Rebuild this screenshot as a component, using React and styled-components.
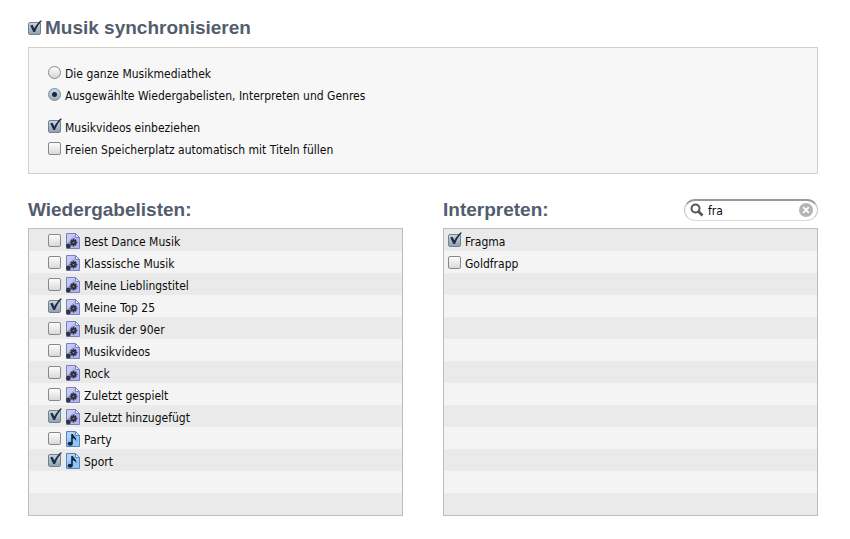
import React, { useState } from "react";
import styled, { createGlobalStyle } from "styled-components";

const GlobalStyle = createGlobalStyle`
  * {
    box-sizing: border-box;
  }
  body {
    margin: 0;
    background: #ffffff;
    color: #0c0c0c;
    font-family: Tahoma, "DejaVu Sans Condensed", "Noto Sans", sans-serif;
    font-size: 12px;
    line-height: 22px;
  }
`;

const Page = styled.main`
  padding: 16px 32px 22px 28px;
`;

const Heading = styled.h2`
  margin: 0;
  color: #525d6e;
  font-family: "Liberation Sans", Arial, sans-serif;
  font-size: 19px;
  font-weight: bold;
  line-height: 24px;
`;

const Panel = styled.section`
  margin-top: 7px;
  padding: 15px 19px 12px;
  background: #f7f7f7;
  border: 1px solid #cfcfcb;
`;

const OptionGroup = styled.div`
  & + & {
    margin-top: 10px;
  }
`;

const Columns = styled.div`
  display: grid;
  grid-template-columns: 1fr 1fr;
  gap: 40px;
  margin-top: 24px;
`;

const ColumnHeader = styled.header`
  display: flex;
  justify-content: space-between;
  align-items: center;
  height: 24px;
  margin-bottom: 6px;
`;

const List = styled.ul`
  margin: 0;
  padding: 0;
  list-style: none;
  border: 1px solid #bdbdbd;
`;

const Row = styled.li`
  height: 22px;
  padding-top: 2px;
  padding-left: ${(props) => (props.$indent ? "19px" : "4px")};
  background: #f4f4f4;

  &:nth-child(odd) {
    background: #eaeaea;
  }
`;

const Option = styled.label`
  display: flex;
  align-items: center;
  gap: 4px;
  line-height: ${(props) => (props.$title ? "24px" : "22px")};
`;

const ControlBox = styled.span`
  position: relative;
  flex: none;
  width: 13px;
  height: 13px;
  margin-bottom: ${(props) => (props.$title ? "0" : "3px")};
`;

const Checkbox = styled.input`
  appearance: none;
  display: block;
  width: 13px;
  height: 13px;
  margin: 0;
  border: 1px solid #85888c;
  border-radius: 2px;
  background: linear-gradient(#fdfdfd, #d9d9d9);

  &:checked {
    border-color: #75808e;
    background: linear-gradient(#c9d4e0, #92a1b2);
  }

  & + svg {
    display: none;
  }

  &:checked + svg {
    display: block;
  }
`;

const Radio = styled.input`
  appearance: none;
  display: block;
  width: 13px;
  height: 13px;
  margin: 0;
  border: 1px solid #85888c;
  border-radius: 50%;
  background: linear-gradient(#fdfdfd, #d5d5d5);

  &:checked {
    border-color: #7d8896;
    background:
      radial-gradient(circle, #17283f 0 2px, transparent 3px),
      linear-gradient(#ccd7e3, #9eacbc);
  }
`;

// the tick sticks out of its box at the top right
const TickSvg = styled.svg`
  position: absolute;
  left: 0;
  bottom: 0;
  width: 15px;
  height: 15px;
  pointer-events: none;
`;

const ItemName = styled.span`
  display: flex;
  align-items: center;
  gap: 3px;
  margin-left: 1px;
`;

const FileSvg = styled.svg`
  flex: none;
  width: 15px;
  height: 16px;
  margin-bottom: 2px;
`;

const SearchBox = styled.div`
  display: flex;
  align-items: center;
  gap: 4px;
  width: 134px;
  height: 22px;
  padding: 0 4px 0 5px;
  background: #ffffff;
  border: 1px solid #c4c4c4;
  border-top: 2px solid #9a9a9a;
  border-bottom-color: #dadada;
  border-radius: 11px;
`;

const SearchSvg = styled.svg`
  flex: none;
  width: 14px;
  height: 14px;
  margin-bottom: 1px;
`;

const SearchInput = styled.input`
  flex: 1;
  min-width: 0;
  padding: 0;
  border: none;
  outline: none;
  background: none;
  color: inherit;
  font: inherit;
  line-height: 18px;
`;

const ClearButton = styled.button`
  display: flex;
  flex: none;
  margin-bottom: 1px;
  padding: 0;
  border: none;
  background: none;
`;

const playlists = [
  { name: "Best Dance Musik", smart: true },
  { name: "Klassische Musik", smart: true },
  { name: "Meine Lieblingstitel", smart: true },
  { name: "Meine Top 25", smart: true, checked: true },
  { name: "Musik der 90er", smart: true },
  { name: "Musikvideos", smart: true },
  { name: "Rock", smart: true },
  { name: "Zuletzt gespielt", smart: true },
  { name: "Zuletzt hinzugefügt", smart: true, checked: true },
  { name: "Party" },
  { name: "Sport", checked: true },
];

const artists = [{ name: "Fragma", checked: true }, { name: "Goldfrapp" }];

const ROWS = 13;

function CheckOption({ title, checked, children }) {
  return (
    <Option $title={title}>
      <ControlBox $title={title}>
        <Checkbox type="checkbox" defaultChecked={checked} />
        <TickSvg viewBox="0 0 15 15" aria-hidden="true">
          <path
            d="M2.2 5.6 4.6 4.8 6.2 8.4C8 5.2 10 2.6 12.4.4L14 .8C11 4 8.8 7.4 7 12H5.4Z"
            fill="#1c2c42"
          />
        </TickSvg>
      </ControlBox>
      {children}
    </Option>
  );
}

function RadioOption({ value, checked, children }) {
  return (
    <Option>
      <ControlBox>
        <Radio type="radio" name="scope" value={value} defaultChecked={checked} />
      </ControlBox>
      {children}
    </Option>
  );
}

function FileIcon({ smart }) {
  return (
    <FileSvg viewBox="0 0 15 16" aria-hidden="true">
      <path
        d="M.5.5H9.5L13.5 4.5V15.5H.5Z"
        fill={smart ? "#b0b7f2" : "#93c5f5"}
        stroke={smart ? "#7b80bd" : "#5586bb"}
      />
      <path d="M1 1H9L1 10Z" fill="#ffffff" opacity="0.25" />
      <path
        d="M9.5.5V4.5H13.5Z"
        fill={smart ? "#eceeff" : "#e2f1ff"}
        stroke={smart ? "#7b80bd" : "#5586bb"}
      />
      {smart ? (
        <g fill="#30323f">
          <circle cx="7.5" cy="9.5" r="2.9" />
          <path
            d="M7.5 5.6V13.4M3.6 9.5H11.4M4.8 6.8 10.2 12.2M10.2 6.8 4.8 12.2"
            stroke="#30323f"
            strokeWidth="1.6"
          />
          <circle cx="7.5" cy="9.5" r=".8" fill="#8d92c4" />
          <circle cx="2.4" cy="13" r="2.4" />
        </g>
      ) : (
        <g fill="#14253f">
          <path d="M5.2 3H6.8C7.4 5.4 10.8 6 10.4 10.4 9.6 8.4 8.4 7.6 6.8 7.2V12.8H5.2Z" />
          <ellipse cx="4.2" cy="12.8" rx="2.6" ry="2" />
        </g>
      )}
    </FileSvg>
  );
}

function EmptyRows({ used }) {
  return Array.from({ length: ROWS - used }, (_, i) => <Row key={i} aria-hidden="true" />);
}

function App() {
  const [query, setQuery] = useState("fra");
  const found = artists.filter((a) => a.name.toLowerCase().includes(query.toLowerCase()));

  return (
    <>
      <GlobalStyle />
      <Page>
        <Heading>
          <CheckOption title checked>
            Musik synchronisieren
          </CheckOption>
        </Heading>
        <Panel>
          <OptionGroup>
            <RadioOption value="all">Die ganze Musikmediathek</RadioOption>
            <RadioOption value="selected" checked>
              Ausgewählte Wiedergabelisten, Interpreten und Genres
            </RadioOption>
          </OptionGroup>
          <OptionGroup>
            <CheckOption checked>Musikvideos einbeziehen</CheckOption>
            <CheckOption>Freien Speicherplatz automatisch mit Titeln füllen</CheckOption>
          </OptionGroup>
        </Panel>
        <Columns>
          <section>
            <ColumnHeader>
              <Heading>Wiedergabelisten:</Heading>
            </ColumnHeader>
            <List>
              {playlists.map((p) => (
                <Row key={p.name} $indent>
                  <CheckOption checked={p.checked}>
                    <ItemName>
                      <FileIcon smart={p.smart} />
                      {p.name}
                    </ItemName>
                  </CheckOption>
                </Row>
              ))}
              <EmptyRows used={playlists.length} />
            </List>
          </section>
          <section>
            <ColumnHeader>
              <Heading>Interpreten:</Heading>
              <SearchBox>
                <SearchSvg viewBox="0 0 14 14" aria-hidden="true">
                  <circle cx="5.5" cy="5.5" r="4" fill="none" stroke="#555" strokeWidth="2" />
                  <path d="M8.5 8.5 12.5 12.5" stroke="#555" strokeWidth="2.6" />
                </SearchSvg>
                <SearchInput
                  type="text"
                  aria-label="Interpreten suchen"
                  value={query}
                  onChange={(e) => setQuery(e.target.value)}
                />
                <ClearButton type="button" aria-label="Suche löschen" onClick={() => setQuery("")}>
                  <svg width="14" height="14" viewBox="0 0 14 14" aria-hidden="true">
                    <circle cx="7" cy="7" r="7" fill="#b5b5b5" />
                    <path d="M4.2 4.2 9.8 9.8M9.8 4.2 4.2 9.8" stroke="#fff" strokeWidth="1.8" />
                  </svg>
                </ClearButton>
              </SearchBox>
            </ColumnHeader>
            <List>
              {found.map((a) => (
                <Row key={a.name}>
                  <CheckOption checked={a.checked}>{a.name}</CheckOption>
                </Row>
              ))}
              <EmptyRows used={found.length} />
            </List>
          </section>
        </Columns>
      </Page>
    </>
  );
}

export default App;
